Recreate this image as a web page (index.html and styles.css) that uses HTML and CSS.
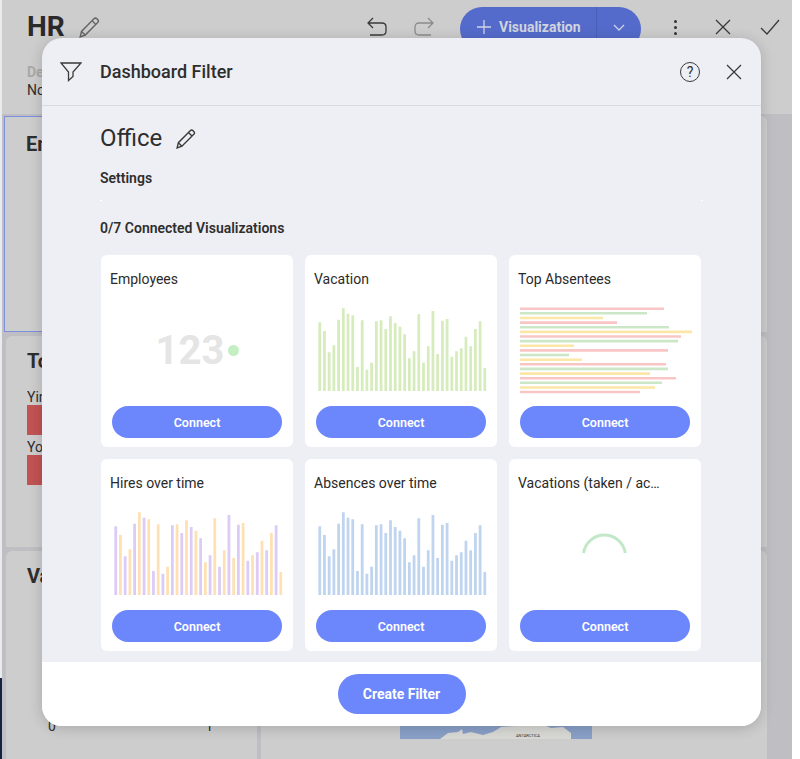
FILE: index.html
```html
<!DOCTYPE html>
<html lang="en">
<head>
  <meta charset="UTF-8">
  <title>Dashboard Filter</title>
  <link rel="stylesheet" href="styles.css">
</head>
<body>
  <svg class="defs" width="0" height="0">
    <defs>
      <path id="bars-a" d="M1.75 84V15.3M11.25 84V45.3M20.75 84V12.7M30.25 84V6.7M39.75 84V60M49.25 84V62.7M58.75 84V14.3M68.25 84V22M77.75 84V16M87.25 84V27.3M96.75 84V44.3M106.25 84V55.7M115.75 84V4M125.25 84V13.7M134.75 84V49.7M144.25 84V41.3M153.75 84V39.3M163.25 84V14.3"/>
      <path id="bars-b" d="M6.5 84V24M16 84V38.3M25.5 84V1.3M35 84V8.3M44.5 84V13.3M54 84V55.7M63.5 84V13.3M73 84V9.3M82.5 84V19.7M92 84V51.3M101.5 84V7.3M111 84V39.3M120.5 84V47M130 84V12M139.5 84V44.3M149 84V29.7M158.5 84V22M168 84V61"/>
      <path id="pencil" d="M2 19l1.2-5L14.5 2.6c.8-.8 1.900-.8 2.700 0l.7.7c.8.8.8 1.900 0 2.700L6.600 17.300 2 19zM3.200 14l3.400 3.300M12.800 4.300l3.400 3.400"/>
      <path id="cross" d="M1 1l14 14M15 1L1 15"/>
    </defs>
  </svg>

  <div class="strip">
    <span class="strip-night"></span>
  </div>

  <div class="page">
    <header class="top">
      <div class="toolbar">
        <h1 class="dash-title">HR</h1>
        <svg class="icon pencil-big" width="20" height="20" viewBox="0 0 20 20"><use href="#pencil"/></svg>
        <div class="toolbar-actions">
          <svg class="icon" width="22" height="22" viewBox="0 0 22 22"><path d="M7 2L2 7l5 5M2 7h14c2.500 0 4 1.600 4 4v4c0 2.400-1.500 4-4 4H4"/></svg>
          <svg class="icon icon-dim" width="22" height="22" viewBox="0 0 22 22"><path d="M15 2l5 5-5 5M20 7H6c-2.500 0-4 1.600-4 4v4c0 2.400 1.500 4 4 4h12"/></svg>
          <div class="viz-btn">
            <span class="viz-main">
              <svg class="icon-light" width="16" height="16" viewBox="0 0 16 16"><path d="M8 1v14M1 8h14"/></svg>
              Visualization
            </span>
            <span class="viz-drop">
              <svg class="icon-light" width="12" height="7" viewBox="0 0 12 7"><path d="M1 1l5 5 5-5"/></svg>
            </span>
          </div>
          <span class="dots"><i></i><i></i><i></i></span>
          <svg class="icon" width="16" height="16" viewBox="0 0 16 16"><use href="#cross"/></svg>
          <svg class="icon" width="20" height="16" viewBox="0 0 20 16"><path d="M1 9l6 6L19 1"/></svg>
        </div>
      </div>
      <div class="dash-desc">
        <strong>Description</strong>
        <span>None</span>
      </div>
    </header>

    <main class="board">
      <section class="tile tile-selected"><h3>Emp</h3></section>
      <section class="tile"></section>
      <section class="tile">
        <h3>Top</h3>
        <p class="tile-label">Yin</p>
        <div class="tile-bar"></div>
        <p class="tile-label">Yolanda</p>
        <div class="tile-bar"></div>
      </section>
      <section class="tile"></section>
      <section class="tile tile-axis">
        <h3>Vac</h3>
        <div class="axis"><span>0</span><span>1</span></div>
      </section>
      <section class="tile tile-map">
        <div class="map">
          <svg width="192" height="60" viewBox="0 0 192 60"><path fill="#d9d9d6" d="M40 60l8-6 10-1 4-3 1 5 8-2 12 3 10-3 8-5 14-1 8-3 10 2 8-1 10 4 12-1 8 6v6H40z"/></svg>
          <span class="map-label">ANTARCTICA</span>
        </div>
      </section>
    </main>

    <div class="modal">
      <div class="modal-head">
        <svg class="icon filter-icon" width="22" height="20" viewBox="0 0 22 20"><path d="M1 1h20l-8 9v4.500L8.500 18.500V10z"/></svg>
        <h2 class="modal-title">Dashboard Filter</h2>
        <span class="help">?</span>
        <svg class="icon" width="16" height="16" viewBox="0 0 16 16"><use href="#cross"/></svg>
      </div>

      <div class="modal-body">
        <div class="name-row">
          <span class="filter-name">Office</span>
          <svg class="icon" width="21" height="21" viewBox="0 0 20 20"><use href="#pencil"/></svg>
        </div>
        <h4 class="section-title">Settings</h4>
        <div class="settings-line"></div>
        <h4 class="section-title connected">0/7 Connected Visualizations</h4>

        <div class="viz-grid">
          <article class="viz-card">
            <h5>Employees</h5>
            <div class="kpi"><span class="kpi-num">123</span><span class="kpi-dot"></span></div>
            <button class="connect">Connect</button>
          </article>
          <article class="viz-card">
            <h5>Vacation</h5>
            <svg class="bars" width="170" height="84" viewBox="0 0 170 84"><g class="c-green"><use href="#bars-a"/><use href="#bars-b"/></g></svg>
            <button class="connect">Connect</button>
          </article>
          <article class="viz-card">
            <h5>Top Absentees</h5>
            <svg class="hbars" width="174" height="88" viewBox="0 0 174 88">
              <path class="c-red" d="M0 2.700H144M0 16.600H97M0 30.500H161M0 44.400H148M0 58.300H146M0 72.200H156M0 86H120"/>
              <path class="c-mint" d="M0 7.300H127M0 21.200H149M0 35.100H158M0 49H49M0 62.900H148M0 76.800H142"/>
              <path class="c-sand" d="M0 12H83M0 25.900H172M0 39.800H54M0 53.700H62M0 67.600H130M0 81.500H135"/>
            </svg>
            <button class="connect">Connect</button>
          </article>
          <article class="viz-card">
            <h5>Hires over time</h5>
            <svg class="bars" width="170" height="84" viewBox="0 0 170 84"><g class="c-purple"><use href="#bars-a"/></g><g class="c-orange"><use href="#bars-b"/></g></svg>
            <button class="connect">Connect</button>
          </article>
          <article class="viz-card">
            <h5>Absences over time</h5>
            <svg class="bars" width="170" height="84" viewBox="0 0 170 84"><g class="c-blue"><use href="#bars-a"/><use href="#bars-b"/></g></svg>
            <button class="connect">Connect</button>
          </article>
          <article class="viz-card">
            <h5>Vacations (taken / ac…</h5>
            <svg class="bars" width="170" height="84" viewBox="0 0 170 84"><path class="spinner" d="M62 42A21.250 21.250 0 0 1 104 42"/></svg>
            <button class="connect">Connect</button>
          </article>
        </div>
      </div>

      <div class="modal-foot">
        <button class="create">Create Filter</button>
      </div>
    </div>
  </div>
</body>
</html>
```

FILE: styles.css
```css
* {
  box-sizing: border-box;
}

html, body {
  margin: 0;
  height: 759px;
  overflow: hidden;
  background: #fff;
}

body {
  display: flex;
  font-family: Roboto, "Liberation Sans", sans-serif;
  color: #2e2e2e;
}

h1, h2, h3, h4, h5, p {
  margin: 0;
}

.defs {
  position: absolute;
}

.icon {
  fill: none;
  stroke: #3a3a3a;
  stroke-width: 1.3;
  flex: none;
}

.icon-dim {
  stroke: #8b8b8b;
}

.icon-light {
  fill: none;
  stroke: #cfd3e6;
  stroke-width: 1.3;
}

/* thin edge of the window behind */
.strip {
  width: 2px;
  height: 759px;
  background: #e9ecef;
  display: flex;
  flex-direction: column;
  justify-content: flex-end;
  flex: none;
}

.strip-night {
  height: 81px;
  background: #13233f;
}

.page {
  position: relative;
  width: 790px;
  height: 759px;
  flex: none;
  background: #cdcdcd;
}

.top {
  height: 114px;
  padding-left: 25px;
}

.toolbar {
  display: flex;
  align-items: center;
  height: 54px;
}

.dash-title {
  font-size: 28px;
  font-weight: 700;
  line-height: 54px;
  color: #2a2a2a;
}

.pencil-big {
  margin-left: 13px;
  stroke: #666;
  width: 22px;
  height: 22px;
}

.toolbar-actions {
  display: flex;
  align-items: center;
  margin-left: auto;
  padding-right: 12px;
}

.toolbar-actions > .icon:nth-child(2) {
  margin-left: 25px;
}

.viz-btn {
  display: flex;
  align-items: center;
  height: 44px;
  margin: 4px 0 0 25px;
  align-self: flex-start;
  width: 181px;
  background: #546bcb;
  border-radius: 22px;
  color: #d2d4de;
  font-size: 14px;
  font-weight: 700;
}

.viz-main {
  display: flex;
  align-items: center;
  gap: 7px;
  padding-left: 16px;
  width: 137px;
  height: 100%;
  border-right: 1px solid #4a60b8;
  padding-bottom: 4px;
}

.viz-drop {
  display: flex;
  justify-content: center;
  flex: 1;
  padding-bottom: 4px;
  padding-right: 1px;
}

.dots {
  display: flex;
  flex-direction: column;
  gap: 3px;
  margin: 0 0 0 33px;
}

.dots i {
  width: 3px;
  height: 3px;
  border-radius: 50%;
  background: #333;
}

.toolbar-actions > .icon:nth-child(5) {
  margin-left: 38px;
}

.toolbar-actions > .icon:nth-child(6) {
  margin-left: 29px;
}

.dash-desc {
  display: flex;
  flex-direction: column;
  font-size: 14px;
  line-height: 18px;
  margin-top: 9px;
}

.dash-desc strong {
  color: #a9a9a9;
  font-weight: 700;
}

.board {
  display: grid;
  grid-template-columns: 251px 506px;
  grid-template-rows: 216px 211px 209px;
  column-gap: 4px;
  row-gap: 4px;
  height: 645px;
  padding: 2px 0 0 4px;
  background: #bebec3;
}

.tile {
  background: #cdcdcd;
  border-radius: 6px 6px 0 0;
  padding: 13px 21px 16px;
  overflow: hidden;
}

.tile h3 {
  font-size: 20px;
  font-weight: 700;
  line-height: 24px;
  white-space: nowrap;
}

.tile-selected {
  margin-left: -2px;
  border: 1.5px solid #7b8fdc;
  border-radius: 0;
  padding: 15px 21px;
}

.tile-label {
  font-size: 14px;
  line-height: 16px;
  margin-top: 16px;
}

.tile-label + .tile-bar + .tile-label {
  margin-top: 4px;
}

.tile-bar {
  height: 30px;
  background: #c25353;
  margin-top: 0;
}

.tile-axis {
  display: flex;
  flex-direction: column;
}

.axis {
  display: flex;
  justify-content: space-between;
  margin: auto 23px 10px 21px;
  font-size: 14px;
  line-height: 16px;
}

.tile-map {
  padding: 128px 0 0 139px;
}

.map {
  position: relative;
  width: 192px;
  height: 60px;
  background: #8aa0c8;
}

.map svg {
  display: block;
}

.map-label {
  position: absolute;
  left: 116px;
  bottom: 0;
  font-size: 4px;
  line-height: 6px;
  color: #333;
}

/* dialog */
.modal {
  position: absolute;
  left: 40px;
  top: 38px;
  width: 719px;
  height: 688px;
  display: flex;
  flex-direction: column;
  overflow: hidden;
  background: #eeeff4;
  border-radius: 20px;
  box-shadow: 0 2px 14px rgba(0, 0, 0, 0.18);
}

.modal-head {
  display: flex;
  align-items: center;
  height: 68px;
  padding: 0 19px 0 18px;
  border-bottom: 1px solid #d9dae0;
  flex: none;
}

.modal-title {
  margin-left: 18px;
  font-size: 18px;
  font-weight: 500;
  flex: 1;
}

.help {
  width: 20px;
  height: 20px;
  margin-right: 26px;
  border: 1.3px solid #3a3a3a;
  border-radius: 50%;
  font-size: 14px;
  line-height: 18px;
  text-align: center;
}

.modal-body {
  flex: 1;
  padding: 0 58px;
  overflow: hidden;
}

.name-row {
  display: flex;
  align-items: center;
  gap: 13px;
  height: 64px;
}

.filter-name {
  font-size: 24px;
}

.section-title {
  font-size: 14px;
  font-weight: 600;
  line-height: 16px;
}

.settings-line {
  height: 1px;
  width: 603px;
  margin-top: 14px;
  background: linear-gradient(to right, #fff 2px, transparent 2px, transparent 601px, #fff 601px);
}

.connected {
  margin-top: 19px;
}

.viz-grid {
  display: grid;
  grid-template-columns: repeat(3, 192px);
  grid-auto-rows: 192px;
  gap: 12px;
  margin-top: 19px;
  padding-left: 1px;
}

.viz-card {
  display: flex;
  flex-direction: column;
  align-items: flex-start;
  background: #fff;
  border-radius: 6px;
  padding: 14px 11px 9px;
}

.viz-card h5 {
  font-size: 14px;
  font-weight: 400;
  line-height: 20px;
  margin-left: -2px;
  color: #2a2a2a;
  white-space: nowrap;
}

.bars {
  margin: auto 0 15px 1.5px;
  display: block;
  transform: scaleX(0.993);
  transform-origin: left;
}

.bars g {
  fill: none;
  stroke-width: 2.8;
}

.c-green { stroke: #d6ecbd; }
.c-purple { stroke: #dccbf6; }
.c-orange { stroke: #fde1b4; }
.c-blue { stroke: #bfd4ef; }

.hbars {
  margin: auto 0 12px 0;
  display: block;
}

.hbars path {
  fill: none;
  stroke-width: 2.6;
}

.c-red { stroke: #f9c6c6; }
.c-mint { stroke: #cbe7c8; }
.c-sand { stroke: #fde7a8; }

.spinner {
  fill: none;
  stroke: #c3e8c8;
  stroke-width: 3;
}

.kpi {
  display: flex;
  align-items: center;
  gap: 4px;
  align-self: center;
  margin: auto 0 30px 1px;
  height: 52px;
}

.kpi-num {
  font-size: 40px;
  font-weight: 700;
  color: #e5e5e5;
}

.kpi-dot {
  width: 11px;
  height: 11px;
  border-radius: 50%;
  background: #c3efc3;
}

.connect, .create {
  border: none;
  color: #fff;
  background: #6c86fb;
  font-family: Roboto, "Liberation Sans", sans-serif;
  font-weight: 700;
  cursor: pointer;
}

.connect {
  width: 170px;
  height: 32px;
  flex: none;
  border-radius: 16px;
  font-size: 12.5px;
  font-weight: 600;
}

.modal-foot {
  display: flex;
  justify-content: center;
  align-items: center;
  height: 64px;
  flex: none;
  background: #fff;
}

.create {
  width: 128px;
  height: 40px;
  border-radius: 20px;
  font-size: 14px;
}
```
